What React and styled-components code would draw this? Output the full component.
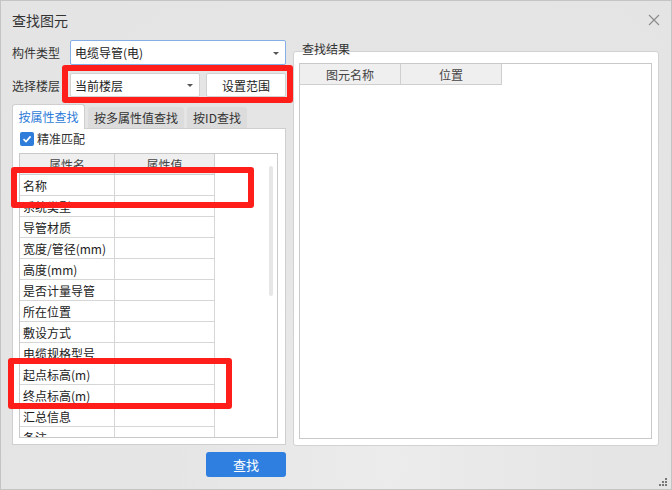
import React from 'react';
import styled, { createGlobalStyle } from 'styled-components';

const GlobalStyle = createGlobalStyle`
  html, body {
    margin: 0;
    padding: 0;
    background: #e5e5e5;
  }
  * {
    box-sizing: border-box;
  }
`;

const Window = styled.div`
  position: relative;
  width: 672px;
  height: 490px;
  border: 1px solid #c4c4c4;
  background: radial-gradient(ellipse at 58% 95%, #ececec 0%, #e5e5e5 40%, #e4e4e4 100%);
  font-family: "Noto Sans CJK SC", "Noto Sans", sans-serif;
  font-size: 12px;
  color: #333;
  overflow: hidden;
`;

const TitleBar = styled.div`
  height: 39px;
  display: flex;
  align-items: center;
  justify-content: space-between;
  padding: 0 11px 1px 11px;
  font-size: 14px;
  color: #333;
`;

const CloseButton = styled.div`
  width: 12px;
  height: 12px;
  display: flex;
`;

const Body = styled.div`
  display: flex;
  gap: 7px;
  padding: 0 12px 0 11px;
`;

const LeftColumn = styled.div`
  width: 274px;
  display: flex;
  flex-direction: column;
`;

const FieldRow = styled.div`
  display: flex;
  align-items: center;
  height: ${p => p.$h}px;
  margin-top: ${p => p.$mt || 0}px;
`;

const Label = styled.div`
  width: 58px;
  flex-shrink: 0;
`;

const Select = styled.div`
  width: ${p => (p.$w ? `${p.$w}px` : 'auto')};
  flex: ${p => (p.$w ? 'none' : 1)};
  height: 100%;
  background: #fff;
  border: 1px solid ${p => (p.$focus ? '#84afe6' : '#d2d2d2')};
  border-radius: 2px;
  display: flex;
  align-items: center;
  justify-content: space-between;
  padding: 0 6px 0 4px;
  color: #222;
`;

const Caret = styled.span`
  width: 0;
  height: 0;
  border-left: 3px solid transparent;
  border-right: 3px solid transparent;
  border-top: 3px solid #555;
  margin-top: 1px;
`;

const PlainButton = styled.div`
  width: 80px;
  height: 100%;
  margin-left: 6px;
  background: #fff;
  border: 1px solid #d2d2d2;
  border-radius: 2px;
  display: flex;
  align-items: center;
  justify-content: center;
  color: #222;
`;

const TabBar = styled.div`
  display: flex;
  align-items: flex-end;
  gap: 3px;
  height: 24px;
  margin-top: 7px;
  padding-left: 1px;
`;

const Tab = styled.div`
  position: relative;
  z-index: 1;
  height: ${p => (p.$active ? 25 : 21)}px;
  margin-bottom: ${p => (p.$active ? -1 : 0)}px;
  width: ${p => p.$w}px;
  display: flex;
  align-items: center;
  justify-content: center;
  padding-bottom: ${p => (p.$active ? 2 : 0)}px;
  background: ${p => (p.$active ? '#fff' : '#dcdcdc')};
  border: ${p => (p.$active ? '1px solid #cfcfcf' : 'none')};
  border-bottom: none;
  border-radius: 3px 3px 0 0;
  color: ${p => (p.$active ? '#2d7bd8' : '#333')};
  margin-left: ${p => (p.$active ? -1 : 0)}px;
`;

const Panel = styled.div`
  height: 317px;
  background: #fff;
  border: 1px solid #cfcfcf;
  padding: 2px 7px 6px 6px;
  display: flex;
  flex-direction: column;
`;

const CheckRow = styled.div`
  height: 15px;
  flex-shrink: 0;
  display: flex;
  align-items: center;
  gap: 3px;
  padding-left: 1px;
`;

const CheckBox = styled.span`
  width: 14px;
  height: 14px;
  border-radius: 2px;
  background: #2f7ddb;
  display: flex;
  align-items: center;
  justify-content: center;
`;

const TableBox = styled.div`
  margin-top: 7px;
  height: 285px;
  flex-shrink: 0;
  border: 1px solid #c9c9c9;
  display: flex;
  overflow: hidden;
`;

const Grid = styled.div`
  width: 195px;
  flex-shrink: 0;
  display: grid;
  grid-template-columns: 95px 100px;
  grid-auto-rows: 21px;
  align-content: start;
`;

const HeadCell = styled.div`
  height: 21px;
  background: #efefef;
  border-right: 1px solid #cfcfcf;
  border-bottom: 1px solid #cfcfcf;
  display: flex;
  align-items: center;
  justify-content: center;
  color: #444;
`;

const Cell = styled.div`
  height: 21px;
  border-right: 1px solid #d6d6d6;
  border-bottom: 1px solid #d6d6d6;
  display: flex;
  align-items: center;
  padding-left: 3px;
  white-space: nowrap;
  color: #222;
`;

const Spacer = styled.div`
  flex: 1;
`;

const ScrollThumb = styled.div`
  width: 4px;
  height: 130px;
  margin: 12px 4px 0 0;
  border-radius: 2px;
  background: #e6e6e6;
`;

const Footer = styled.div`
  display: flex;
  justify-content: flex-end;
  margin-top: 7px;
`;

const PrimaryButton = styled.div`
  width: 80px;
  height: 25px;
  border-radius: 3px;
  background: #2e7fdf;
  color: #fff;
  font-size: 13px;
  display: flex;
  align-items: center;
  justify-content: center;
`;

const RightColumn = styled.div`
  flex: 1;
  display: flex;
  flex-direction: column;
`;

const GroupTitle = styled.div`
  position: relative;
  z-index: 1;
  height: 16px;
  line-height: 16px;
  margin-bottom: -6px;
  padding-left: 9px;
  margin-top: 1px;
`;

const GroupBox = styled.div`
  height: 395px;
  background: #fff;
  border: 1px solid #d2d2d2;
  border-radius: 3px;
  padding: 11px 6px 6px 5px;
`;

const ResultTable = styled.div`
  height: 100%;
  border: 1px solid #c9c9c9;
  display: flex;
  align-items: flex-start;
`;

const ResultHead = styled(HeadCell)`
  width: 101px;
  height: 21px;
`;

const Mark = styled.div`
  position: absolute;
  left: ${p => p.$x}px;
  top: ${p => p.$y}px;
  width: ${p => p.$w}px;
  height: ${p => p.$h}px;
  border: 6px solid #ff1e1a;
  border-radius: 3px;
  pointer-events: none;
`;

const Grip = styled.svg`
  position: absolute;
  right: 3px;
  bottom: 2px;
`;

const rows = [
  '名称',
  '系统类型',
  '导管材质',
  '宽度/管径(mm)',
  '高度(mm)',
  '是否计量导管',
  '所在位置',
  '敷设方式',
  '电缆规格型号',
  '起点标高(m)',
  '终点标高(m)',
  '汇总信息',
  '备注',
];

export default function App() {
  return (
    <>
      <GlobalStyle />
      <Window>
        <TitleBar>
          <span>查找图元</span>
          <CloseButton>
            <svg width="12" height="12" viewBox="0 0 12 12">
              <path d="M1 1 L11 11 M11 1 L1 11" stroke="#8a8a8a" strokeWidth="1.1" fill="none" />
            </svg>
          </CloseButton>
        </TitleBar>
        <Body>
          <LeftColumn>
            <FieldRow $h={25}>
              <Label>构件类型</Label>
              <Select $focus>
                <span>电缆导管(电)</span>
                <Caret />
              </Select>
            </FieldRow>
            <FieldRow $h={24} $mt={8}>
              <Label>选择楼层</Label>
              <Select $w={130}>
                <span>当前楼层</span>
                <Caret />
              </Select>
              <PlainButton>设置范围</PlainButton>
            </FieldRow>
            <TabBar>
              <Tab $active $w={73}>按属性查找</Tab>
              <Tab $w={96}>按多属性值查找</Tab>
              <Tab $w={60}>按ID查找</Tab>
            </TabBar>
            <Panel>
              <CheckRow>
                <CheckBox>
                  <svg width="10" height="10" viewBox="0 0 10 10">
                    <path d="M1.5 5.2 L4 7.6 L8.6 2.4" stroke="#fff" strokeWidth="1.6" fill="none" />
                  </svg>
                </CheckBox>
                <span>精准匹配</span>
              </CheckRow>
              <TableBox>
                <Grid>
                  <HeadCell>属性名</HeadCell>
                  <HeadCell>属性值</HeadCell>
                  {rows.map(r => (
                    <React.Fragment key={r}>
                      <Cell>{r}</Cell>
                      <Cell />
                    </React.Fragment>
                  ))}
                </Grid>
                <Spacer />
                <ScrollThumb />
              </TableBox>
            </Panel>
            <Footer>
              <PrimaryButton>查找</PrimaryButton>
            </Footer>
          </LeftColumn>
          <RightColumn>
            <GroupTitle>查找结果</GroupTitle>
            <GroupBox>
              <ResultTable>
                <ResultHead>图元名称</ResultHead>
                <ResultHead>位置</ResultHead>
              </ResultTable>
            </GroupBox>
          </RightColumn>
        </Body>
        <Mark $x={61} $y={64} $w={231} $h={38} />
        <Mark $x={10} $y={166} $w={243} $h={41} />
        <Mark $x={7} $y={357} $w={224} $h={51} />
        <Grip width="9" height="9" viewBox="0 0 9 9">
          <rect x="6" y="0" width="2" height="2" fill="#777" />
          <rect x="3" y="3" width="2" height="2" fill="#777" />
          <rect x="6" y="3" width="2" height="2" fill="#777" />
          <rect x="0" y="6" width="2" height="2" fill="#777" />
          <rect x="3" y="6" width="2" height="2" fill="#777" />
          <rect x="6" y="6" width="2" height="2" fill="#777" />
        </Grip>
      </Window>
    </>
  );
}
